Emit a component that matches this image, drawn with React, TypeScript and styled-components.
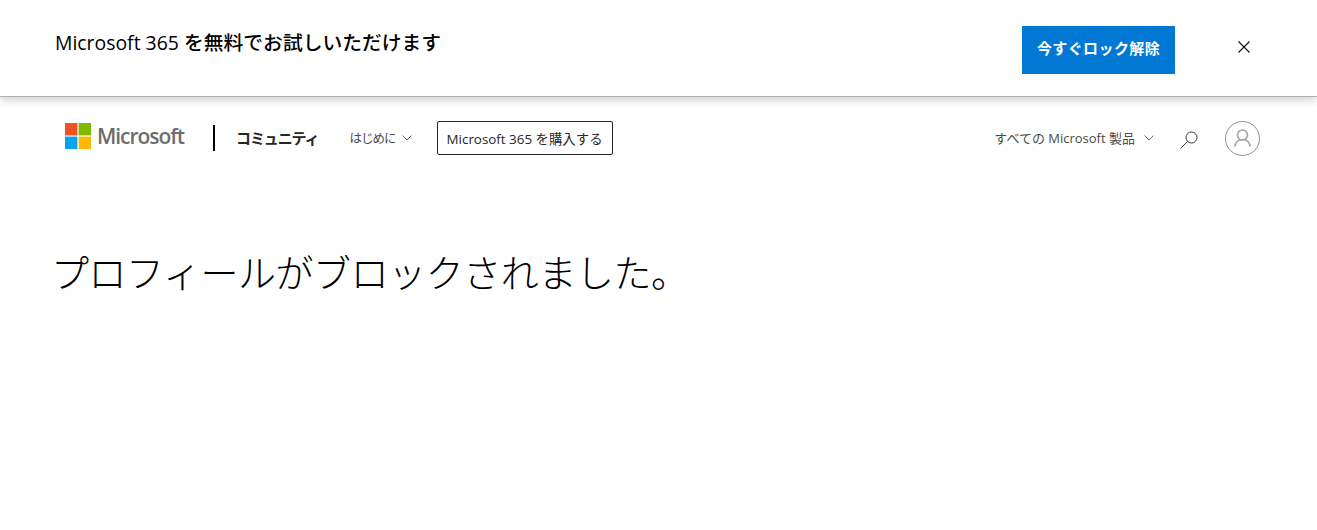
import React from "react";
import styled, { createGlobalStyle } from "styled-components";

const Global = createGlobalStyle`
  html, body { margin: 0; padding: 0; background: #fff; }
  body { font-family: "Open Sans", "Noto Sans CJK JP", sans-serif; color: #000; overflow: hidden; }
`;
const Page = styled.div`width: 1317px; height: 530px; overflow: hidden; background: #fff;`;
const Banner = styled.section`
  height: 97px; box-sizing: border-box; display: flex; align-items: flex-start;
  padding: 26px 66px 0 55px; border-bottom: 1px solid #b0b0b0;
  box-shadow: 0 4px 8px rgba(0,0,0,.16); position: relative;
`;
const BannerText = styled.p`
  margin: 0; flex: 1; font-size: 19.800px; line-height: 34px; font-weight: 500; color: #000;
  font-family: "Open Sans", "Noto Sans CJK JP", sans-serif;
`;
const Latin = styled.span`font-size: 19.400px; font-weight: 400;`;
const UnlockButton = styled.a`
  width: 153px; height: 48px; display: flex; align-items: center; justify-content: center;
  background: #0078d4; color: #fff; font-size: 15px; font-weight: 700; letter-spacing: .4px; padding-bottom: 6px; box-sizing: border-box;
`;
const CloseButton = styled.button`
  border: 0; background: none; padding: 0; margin: 14px 0 0 62px; width: 14px; height: 14px; display: flex;
`;
const Header = styled.header`
  display: flex; align-items: center; height: 82px; box-sizing: border-box; padding: 0 57px 0 65px;
`;
const LogoWrap = styled.a`display: flex; align-items: center; gap: 6px; margin-top: -4px;`;
const Wordmark = styled.span`
  font-family: "Open Sans", sans-serif; font-size: 21px; font-weight: 600; color: #6d6d6d; letter-spacing: -1.050px;
`;
const Divider = styled.span`width: 2px; height: 26px; background: #000; margin: 0 21px 0 29px;`;
const SiteName = styled.a`font-size: 15px; font-weight: 700; color: #262626; letter-spacing: -1.100px; padding-bottom: 2px;`;
const NavItem = styled.a<{ $ml?: number; $gap: number; $size: number; $track: number }>`
  display: flex; align-items: center; gap: ${p => p.$gap}px; font-size: ${p => p.$size}px; letter-spacing: ${p => p.$track}px;
  color: #4a4a4a; margin-left: ${p => p.$ml ?? 0}px; white-space: pre; padding-bottom: 1px;
`;
const BuyButton = styled.a`
  margin-left: 25px; height: 34px; width: 176px; box-sizing: border-box; border: 1px solid #262626; border-radius: 2px;
  display: flex; align-items: center; justify-content: center; font-size: 13.400px; color: #262626; white-space: nowrap;
`;
const Spacer = styled.div`flex: 1;`;
const SearchIcon = styled.span`display: flex; margin-left: 25px; padding-top: 4px;`;
const Avatar = styled.span`
  width: 33px; height: 33px; border: 1px solid #8f8f8f; border-radius: 50%; display: flex; align-items: center; justify-content: center; margin-left: 26px;
`;
const Main = styled.main`padding: 64px 0 0 51px;`;
const Title = styled.h1`
  margin: 0; font-size: 38px; line-height: 56px; font-weight: 300; letter-spacing: -.45px; color: #000;
  font-family: "Noto Sans CJK JP", sans-serif;
`;

const Chevron = () => (
  <svg width="10" height="6" viewBox="0 0 10 6" fill="none" stroke="#666" strokeWidth="1"><path d="M.5.5 5 5 9.500.5" /></svg>
);

export default function App() {
  return (
    <Page>
      <Global />
      <Banner>
        <BannerText><Latin>Microsoft 365</Latin> を無料でお試しいただけます</BannerText>
        <UnlockButton>今すぐロック解除</UnlockButton>
        <CloseButton aria-label="閉じる">
          <svg width="14" height="14" viewBox="0 0 14 14" stroke="#111" strokeWidth="1.100"><path d="M1.500 1.500 12.500 12.500M12.500 1.500 1.500 12.500" /></svg>
        </CloseButton>
      </Banner>
      <Header>
        <LogoWrap>
          <svg width="26" height="26" viewBox="0 0 26 26">
            <rect width="12.400" height="12.400" fill="#f25022" />
            <rect x="13.600" width="12.400" height="12.400" fill="#7fba00" />
            <rect y="13.600" width="12.400" height="12.400" fill="#00a4ef" />
            <rect x="13.600" y="13.600" width="12.400" height="12.400" fill="#ffb900" />
          </svg>
          <Wordmark>Microsoft</Wordmark>
        </LogoWrap>
        <Divider />
        <SiteName>コミュニティ</SiteName>
        <NavItem $ml={31} $gap={6} $size={12.500} $track={-1}>はじめに<Chevron /></NavItem>
        <BuyButton>Microsoft 365 を購入する</BuyButton>
        <Spacer />
        <NavItem $gap={9} $size={13} $track={0}>すべての Microsoft 製品<Chevron /></NavItem>
        <SearchIcon>
          <svg width="20" height="20" viewBox="0 0 20 20" fill="none" stroke="#333" strokeWidth="1"><circle cx="12.500" cy="7.500" r="5.500" /><path d="M8.500 11.500 1.500 18.500" /></svg>
        </SearchIcon>
        <Avatar>
          <svg width="19" height="19" viewBox="0 0 19 19" fill="none" stroke="#a6a6a6" strokeWidth="1.700"><circle cx="9.500" cy="6" r="5" /><path d="M2 17.500c0-4 3-7 7.500-7s7.500 3 7.500 7" /></svg>
        </Avatar>
      </Header>
      <Main><Title>プロフィールがブロックされました。</Title></Main>
    </Page>
  );
}
